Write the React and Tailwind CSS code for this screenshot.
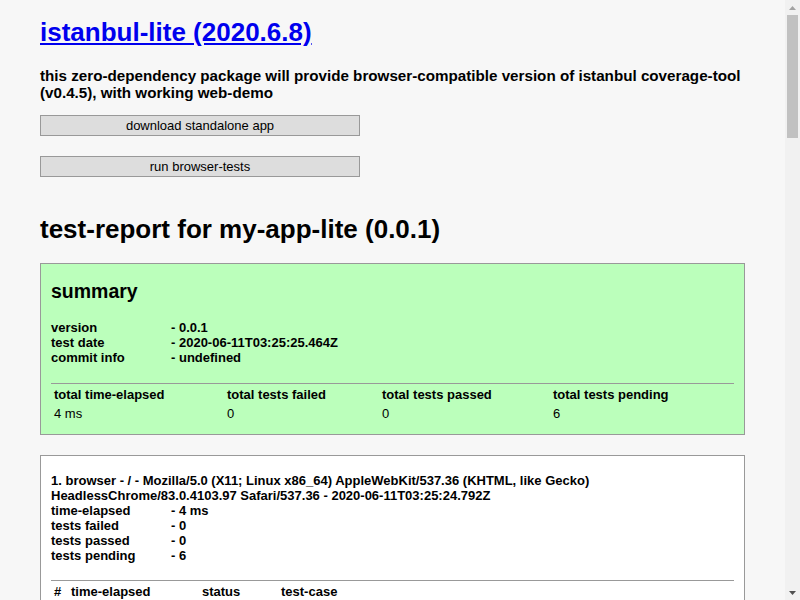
export default function App() {
  const tests = [
    ["1", "0 ms", "pending", "testCase_buildApp_default"],
    ["2", "0 ms", "pending", "testCase_buildCustomOrg_default"],
    ["3", "0 ms", "pending", "testCase_buildReadme_default"],
    ["4", "0 ms", "pending", "testCase_istanbulCoverageMerge_default"],
    ["5", "0 ms", "pending", "testCase_istanbulInstrumentInPackage_default"],
    ["6", "0 ms", "pending", "testCase_webpage_default"],
  ];
  return (
    <div className="flex h-screen w-full overflow-hidden font-['Liberation_Sans',Arial,sans-serif] text-[13px] text-black">
      <div className="min-w-0 flex-1 overflow-hidden bg-[#f7f7f7] px-10 pb-10">
        <h1 className="pt-[18px] text-[26px] font-bold leading-[29px]">
          <a href="#" className="text-[#0000ee] underline">
            istanbul-lite (2020.6.8)
          </a>
        </h1>
        <h3 className="mt-[20px] text-[15.2px] font-bold leading-[17px]">
          this zero-dependency package will provide browser-compatible version of istanbul coverage-tool (v0.4.5), with working web-demo
        </h3>
        <button className="mt-[14px] block h-[21px] w-[320px] border border-[#999] bg-[#ddd] text-center text-[13px] leading-[19px] text-black">
          download standalone app
        </button>
        <button className="mt-[20px] block h-[21px] w-[320px] border border-[#999] bg-[#ddd] text-center text-[13px] leading-[19px] text-black">
          run browser-tests
        </button>
        <h2 className="mt-[38px] text-[26px] font-bold leading-[29px]">
          test-report for my-app-lite (0.0.1)
        </h2>

        <div className="mt-[19px] border border-[#999] bg-[#bbffbb] px-[10px] pt-[16px] pb-[10px]">
          <h2 className="text-[19.5px] font-bold leading-[22px]">summary</h2>
          <div className="mt-[18px] grid grid-cols-[120px_1fr] font-bold leading-[15px]">
            <div>version</div>
            <div>- 0.0.1</div>
            <div>test date</div>
            <div>- 2020-06-11T03:25:25.464Z</div>
            <div>commit info</div>
            <div>- undefined</div>
          </div>
          <div className="mt-[18px] grid grid-cols-[173px_155px_171px_1fr] gap-y-[4px] border-t border-[#999] pt-[3px] pb-[3px] pl-[3px] leading-[15px]">
            <div className="font-bold">total time-elapsed</div>
            <div className="font-bold">total tests failed</div>
            <div className="font-bold">total tests passed</div>
            <div className="font-bold">total tests pending</div>
            <div>4 ms</div>
            <div>0</div>
            <div>0</div>
            <div>6</div>
          </div>
        </div>

        <div className="mt-[20px] border border-[#999] bg-white px-[10px] pt-[17px] pb-[10px]">
          <div className="font-bold leading-[15px]">
            1. browser - / - Mozilla/5.0 (X11; Linux x86_64) AppleWebKit/537.36 (KHTML, like Gecko) HeadlessChrome/83.0.4103.97 Safari/537.36 - 2020-06-11T03:25:24.792Z
          </div>
          <div className="grid grid-cols-[120px_1fr] font-bold leading-[15px]">
            <div>time-elapsed</div>
            <div>- 4 ms</div>
            <div>tests failed</div>
            <div>- 0</div>
            <div>tests passed</div>
            <div>- 0</div>
            <div>tests pending</div>
            <div>- 6</div>
          </div>
          <div className="mt-[17px] grid grid-cols-[17px_131px_79px_1fr] gap-y-[4px] border-t border-[#999] pt-[3px] pb-[3px] pl-[3px] leading-[15px]">
            <div className="font-bold">#</div>
            <div className="font-bold">time-elapsed</div>
            <div className="font-bold">status</div>
            <div className="font-bold">test-case</div>
            {tests.map((t) => (
              <div key={t[0]} className="contents">
                <div>{t[0]}</div>
                <div>{t[1]}</div>
                <div>{t[2]}</div>
                <div>{t[3]}</div>
              </div>
            ))}
          </div>
        </div>
      </div>

      <div className="flex w-[15px] shrink-0 flex-col bg-[#f1f1f1]">
        <div className="flex h-[15px] items-center justify-center">
          <svg width="7" height="4" viewBox="0 0 7 4">
            <polygon points="3.5,0 7,4 0,4" fill="#a3a3a3" />
          </svg>
        </div>
        <div className="flex-1">
          <div className="mx-[2px] h-[123px] bg-[#c1c1c1]" />
        </div>
        <div className="flex h-[15px] items-center justify-center">
          <svg width="7" height="4" viewBox="0 0 7 4">
            <polygon points="0,0 7,0 3.5,4" fill="#505050" />
          </svg>
        </div>
      </div>
    </div>
  );
}
